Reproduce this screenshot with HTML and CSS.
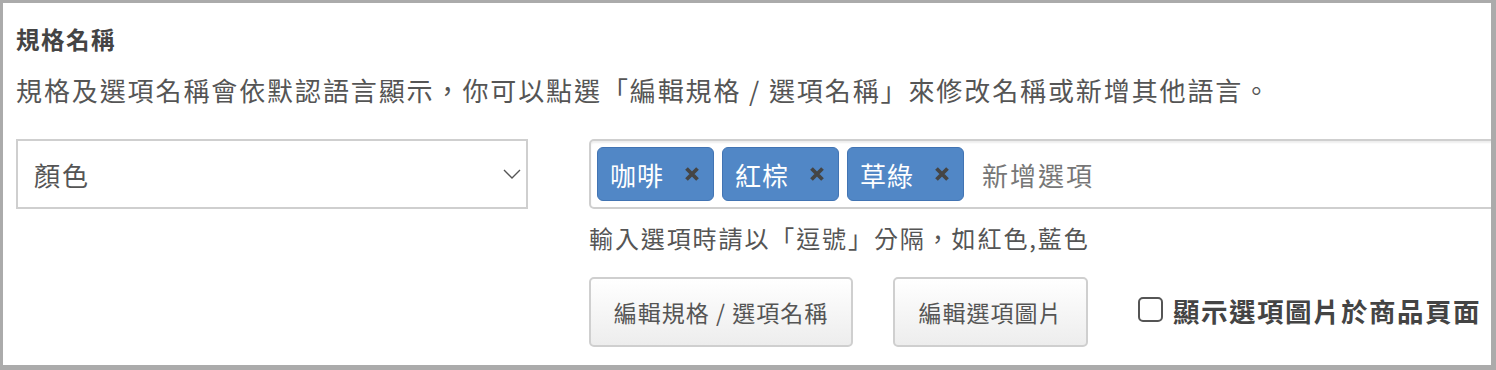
FILE: index.html
```html
<!DOCTYPE html>
<html lang="zh-Hant">
<head>
<meta charset="utf-8">
<title>規格名稱</title>
<link rel="stylesheet" href="styles.css">
</head>
<body>
<div class="panel">
  <div class="title">規格名稱</div>
  <div class="desc">規格及選項名稱會依默認語言顯示，你可以點選「編輯規格 / 選項名稱」來修改名稱或新增其他語言。</div>
  <div class="row">
    <div class="select">
      <span class="select-value">顏色</span>
      <svg class="chevron" width="18" height="10" viewBox="0 0 18 10"><polyline points="1,1 9,9 17,1" fill="none" stroke="#555" stroke-width="1.4"/></svg>
    </div>
    <div class="right">
      <div class="tags-input">
        <span class="tag"><span class="tag-text">咖啡</span><svg class="tag-x" width="16" height="16" viewBox="0 0 16 16"><path d="M2.5 2.5 L13.5 13.5 M13.5 2.5 L2.5 13.5" stroke="#454545" stroke-width="3.8" stroke-linecap="butt"/></svg></span>
        <span class="tag"><span class="tag-text">紅棕</span><svg class="tag-x" width="16" height="16" viewBox="0 0 16 16"><path d="M2.5 2.5 L13.5 13.5 M13.5 2.5 L2.5 13.5" stroke="#454545" stroke-width="3.8" stroke-linecap="butt"/></svg></span>
        <span class="tag"><span class="tag-text">草綠</span><svg class="tag-x" width="16" height="16" viewBox="0 0 16 16"><path d="M2.5 2.5 L13.5 13.5 M13.5 2.5 L2.5 13.5" stroke="#454545" stroke-width="3.8" stroke-linecap="butt"/></svg></span>
        <span class="placeholder">新增選項</span>
      </div>
      <div class="hint">輸入選項時請以「逗號」分隔，如紅色,藍色</div>
      <div class="actions">
        <button class="btn btn-wide">編輯規格 / 選項名稱</button>
        <button class="btn btn-narrow">編輯選項圖片</button>
        <label class="check">
          <span class="box"></span>
          <span class="check-text">顯示選項圖片於商品頁面</span>
        </label>
      </div>
    </div>
  </div>
</div>
</body>
</html>
```
FILE: styles.css
```css
* { box-sizing: border-box; }
html, body { margin: 0; padding: 0; background: #fff; }
body {
  font-family: "Noto Sans CJK TC", "Noto Sans", sans-serif;
  color: #555;
}
.panel {
  width: 1496px;
  height: 370px;
  border-style: solid;
  border-color: #ababab;
  border-width: 3px 5px 5px 3px;
  padding: 21px 0 0 13px;
  overflow: hidden;
}
.title {
  font-size: 23.5px;
  line-height: 30px;
  font-weight: bold;
  letter-spacing: 1.5px;
  color: #444;
}
.desc {
  margin-top: 19px;
  font-size: 26px;
  line-height: 34px;
  letter-spacing: 1.9px;
  white-space: nowrap;
}
.row {
  margin-top: 32px;
  display: flex;
  gap: 61px;
}
.select {
  flex: 0 0 512px;
  height: 70px;
  border: 2px solid #cfcfcf;
  display: flex;
  align-items: center;
  padding-left: 16px;
  padding-right: 5px;
}
.select-value {
  font-size: 26px;
  letter-spacing: 2px;
}
.chevron { margin-left: auto; }
.right {
  flex: 1;
  min-width: 0;
}
.tags-input {
  width: 960px;
  height: 70px;
  border: 2px solid #cfcfcf;
  border-radius: 5px;
  box-shadow: inset 0 2px 2px rgba(0,0,0,0.07);
  padding: 0 6px;
  display: flex;
  align-items: center;
  gap: 8px;
}
.tag {
  height: 54px;
  display: flex;
  align-items: center;
  padding: 0 13px 0 12px;
  background: #5187c6;
  border: 1px solid #4274b3;
  border-radius: 6px;
  color: #fff;
}
.tag-text {
  font-size: 26px;
  letter-spacing: 1px;
  width: 54px;
}
.tag-x { margin-left: 20px; }
.placeholder {
  margin-left: 10px;
  font-size: 26px;
  letter-spacing: 2px;
  color: #777;
}
.hint {
  margin-top: 13px;
  font-size: 24px;
  line-height: 32px;
  letter-spacing: 1.9px;
  white-space: nowrap;
}
.actions {
  margin-top: 23px;
  display: flex;
  align-items: flex-start;
}
.btn {
  height: 70px;
  border: 2px solid #cfcfcf;
  border-radius: 5px;
  background: linear-gradient(#ffffff, #ededed);
  font-family: "Noto Sans CJK TC", "Noto Sans", sans-serif;
  font-size: 23px;
  letter-spacing: 1px;
  color: #555;
  padding: 0;
}
.btn-wide { width: 264px; }
.btn-narrow { width: 195px; margin-left: 40px; }
.check {
  margin-left: 50px;
  margin-top: 14px;
  display: flex;
  align-items: center;
}
.box {
  width: 25px;
  height: 25px;
  border: 2px solid #555;
  border-radius: 5px;
  background: #fff;
  margin-top: -2px;
}
.check-text {
  margin-left: 10px;
  font-size: 26.5px;
  font-weight: bold;
  letter-spacing: 1.5px;
  color: #444;
  white-space: nowrap;
}
```
